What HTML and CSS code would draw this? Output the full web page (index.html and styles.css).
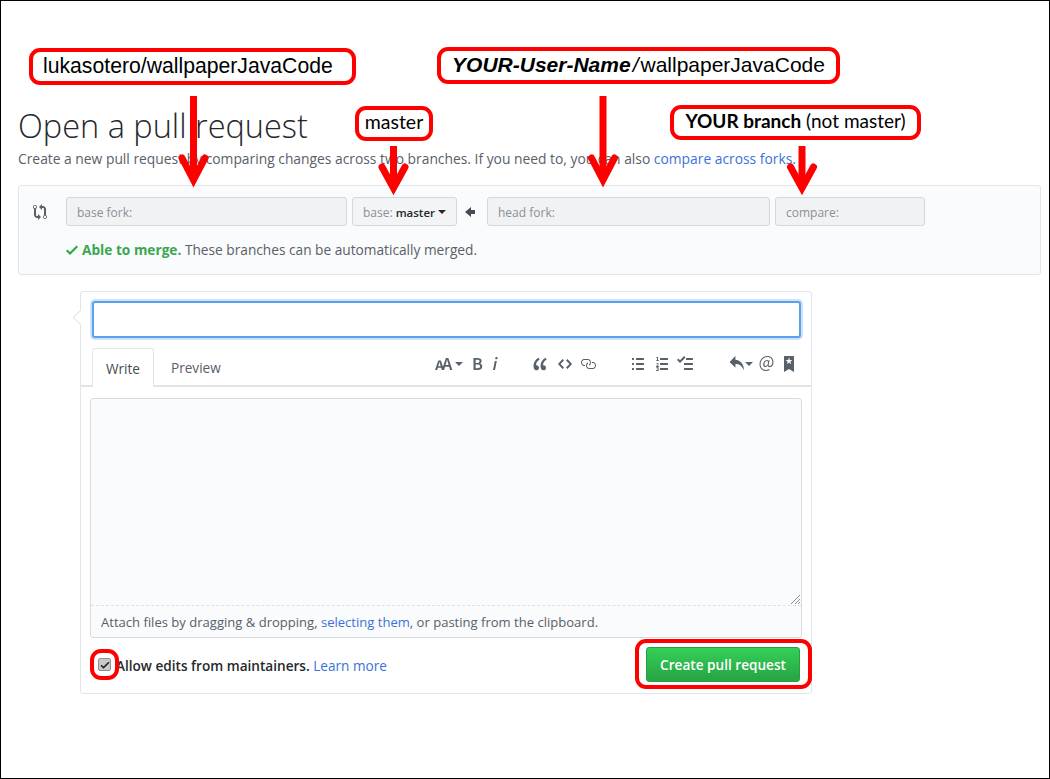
FILE: index.html
```html
<!DOCTYPE html>
<html lang="en">
<head>
    <meta charset="UTF-8" />
    <title>Open a pull request</title>
    <link rel="stylesheet" href="styles.css">
</head>
<body>
<div class="page">
    <h1>Open a pull request</h1>
    <p class="lead">Create a new pull request by comparing changes across two branches. If you need to, you can also <a href="#">compare across forks.</a></p>

    <div class="range">
        <div class="range-row">
            <svg class="ic-compare" viewBox="0 0 14 16" width="14" height="16"><path d="M5 12H4c-.27-.02-.48-.11-.69-.31-.21-.2-.3-.42-.31-.69V4.72A1.993 1.993 0 0 0 2 1a1.993 1.993 0 0 0-1 3.72V11c.03.78.34 1.47.94 2.06.6.59 1.28.91 2.06.94h1v2l3-3-3-3v2zM2 1.8c.66 0 1.2.55 1.2 1.2 0 .65-.55 1.2-1.2 1.2C1.35 4.2.8 3.65.8 3c0-.65.55-1.2 1.2-1.2zm11 9.48V5c-.03-.78-.34-1.47-.94-2.06-.6-.59-1.28-.91-2.06-.94H9V0L6 3l3 3V4h1c.27.02.48.11.69.31.21.2.3.42.31.69v6.28A1.993 1.993 0 0 0 12 15a1.993 1.993 0 0 0 1-3.72zm-1 2.92c-.66 0-1.2-.55-1.2-1.2 0-.65.55-1.2 1.2-1.2.65 0 1.2.55 1.2 1.2 0 .65-.55 1.2-1.2 1.2z"/></svg>
            <div class="pick pick-fork">base fork:</div>
            <div class="pick pick-base">base: <b>master</b><span class="caret"></span></div>
            <svg class="ic-left" viewBox="0 0 10 16" width="10" height="16"><path d="M6 3L0 8l6 5v-3h4V6H6V3z"/></svg>
            <div class="pick pick-head">head fork:</div>
            <div class="pick pick-compare">compare:</div>
        </div>
        <div class="merge">
            <svg class="ic-check" viewBox="0 0 12 16" width="12" height="16"><path d="M12 5l-8 8-4-4 1.5-1.5L4 10l6.5-6.5L12 5z"/></svg>
            <span><b>Able to merge.</b> These branches can be automatically merged.</span>
        </div>
    </div>

    <form class="discussion">
        <div class="title-input"></div>
        <div class="tabbar">
            <div class="tab tab-on">Write</div>
            <div class="tab">Preview</div>
            <div class="toolbar">
                <div class="group group-first">
                    <span class="withcaret"><svg viewBox="0 0 18 16" width="20" height="16"><path d="M13.62 9.08L12.1 3.66h-.06l-1.5 5.42h3.08zM5.7 10.13S4.68 6.52 4.53 6.02h-.08l-1.13 4.11H5.7zM17.31 14h-2.25l-.95-3.25h-4.07L9.09 14H6.84l-.69-2.33H2.87L2.17 14H0l3.3-9.59h2.5l2.17 6.34L10.86 2h2.52l3.94 12h-.01z"/></svg><span class="caret"></span></span>
                    <svg viewBox="0 0 10 16" width="11" height="16"><path d="M1 2h3.83c2.48 0 4.3.75 4.3 2.95 0 1.14-.63 2.23-1.67 2.61v.06c1.33.3 2.3 1.23 2.3 2.86 0 2.39-1.97 3.52-4.61 3.52H1V2zm3.66 4.95c1.67 0 2.38-.66 2.38-1.69 0-1.17-.78-1.61-2.34-1.61H3.13v3.3h1.53zm.27 5.39c1.77 0 2.75-.64 2.75-1.98 0-1.27-.95-1.81-2.75-1.81h-1.8v3.8h1.8v-.01z"/></svg>
                    <svg viewBox="0 0 6 16" width="6" height="16"><path d="M2.81 5h1.98L3 14H1l1.81-9zm.36-2.7c0-.7.58-1.3 1.33-1.3.56 0 1.13.38 1.13 1.03 0 .75-.59 1.3-1.33 1.3-.58 0-1.13-.38-1.13-1.03z"/></svg>
                </div>
                <div class="group">
                    <svg viewBox="0 0 14 16" width="15" height="16"><path d="M6.16 3.5C3.73 5.06 2.55 6.67 2.55 9.36c.16-.05.3-.05.44-.05 1.27 0 2.5.86 2.5 2.41 0 1.61-1.03 2.61-2.5 2.61-1.9 0-2.99-1.52-2.99-4.25 0-3.8 1.75-6.53 5.02-8.42L6.16 3.5zm7 0c-2.43 1.56-3.61 3.17-3.61 5.86.16-.05.3-.05.44-.05 1.27 0 2.5.86 2.5 2.41 0 1.61-1.03 2.61-2.5 2.61-1.89 0-2.98-1.52-2.98-4.25 0-3.8 1.75-6.53 5.02-8.42l1.14 1.84h-.01z"/></svg>
                    <svg viewBox="0 0 14 16" width="14" height="16"><path d="M9.5 3L8 4.5 11.5 8 8 11.5 9.5 13 14 8 9.5 3zm-5 0L0 8l4.5 5L6 11.5 2.5 8 6 4.5 4.5 3z"/></svg>
                    <svg class="ic-link" viewBox="0 0 16 16" width="16" height="16"><path d="M4 9h1v1H4c-1.5 0-3-1.69-3-3.5S2.55 3 4 3h4c1.45 0 3 1.69 3 3.5 0 1.41-.91 2.72-2 3.25V8.59c.58-.45 1-1.27 1-2.09C10 5.22 8.98 4 8 4H4c-.98 0-2 1.22-2 2.5S3 9 4 9zm9-3h-1v1h1c1 0 2 1.22 2 2.5S13.98 12 13 12H9c-.98 0-2-1.22-2-2.5 0-.83.42-1.64 1-2.09V6.25c-1.09.53-2 1.84-2 3.25C6 11.31 7.55 13 9 13h4c1.45 0 3-1.69 3-3.5S14.5 6 13 6z"/></svg>
                </div>
                <div class="group">
                    <svg viewBox="0 0 12 16" width="14" height="16"><path d="M2 13c0 .59 0 1-.59 1H.59C0 14 0 13.59 0 13c0-.59 0-1 .59-1h.81c.59 0 .59.41.59 1H2zm2.59-9h6.81c.59 0 .59-.41.59-1 0-.59 0-1-.59-1H4.59C4 2 4 2.41 4 3c0 .59 0 1 .59 1zM1.41 7H.59C0 7 0 7.41 0 8c0 .59 0 1 .59 1h.81c.59 0 .59-.41.59-1 0-.59 0-1-.59-1h.01zm0-5H.59C0 2 0 2.41 0 3c0 .59 0 1 .59 1h.81c.59 0 .59-.41.59-1 0-.59 0-1-.59-1h.01zm10 5H4.59C4 7 4 7.41 4 8c0 .59 0 1 .59 1h6.81c.59 0 .59-.41.59-1 0-.59 0-1-.59-1h.01zm0 5H4.59C4 12 4 12.41 4 13c0 .59 0 1 .59 1h6.81c.59 0 .59-.41.59-1 0-.59 0-1-.59-1h.01z"/></svg>
                    <svg viewBox="0 0 12 16" width="14" height="16"><path d="M12.01 13c0 .59 0 1-.59 1H4.6c-.59 0-.59-.41-.59-1 0-.59 0-1 .59-1h6.81c.59 0 .59.41.59 1h.01zM4.6 4h6.81C12 4 12 3.59 12 3c0-.59 0-1-.59-1H4.6c-.59 0-.59.41-.59 1 0 .59 0 1 .59 1zm6.81 3H4.6c-.59 0-.59.41-.59 1 0 .59 0 1 .59 1h6.81C12 9 12 8.59 12 8c0-.59 0-1-.59-1zm-9.4-6h-.72c-.3.19-.58.25-1.03.34V2h.75v2.14H.17V5h2.84v-.86h-1V1zm.19 8.75c-.17 0-.42.02-.61.05.48-.5 1.02-1.11 1.02-1.68C2.61 7.42 2.13 7 1.41 7 .86 7 .5 7.19.13 7.59l.5.5c.19-.19.38-.36.64-.36.28 0 .48.16.48.44 0 .48-.67 1.11-1.58 1.95V11h3v-.86h-.97l.01-.39h-.01zm-.08 3.22v-.03c.44-.19.64-.47.64-.86 0-.7-.56-1.11-1.44-1.11-.48 0-.89.19-1.28.52l.55.64c.25-.2.44-.31.69-.31.27 0 .42.13.42.36 0 .27-.2.44-.86.44v.75c.83 0 .98.17.98.47 0 .25-.23.38-.58.38-.28 0-.56-.14-.81-.38l-.48.66c.3.36.77.56 1.41.56.83 0 1.53-.41 1.53-1.16 0-.5-.31-.81-.77-.94v.01z"/></svg>
                    <svg class="ic-tasks" viewBox="0 0 16 16" width="18" height="16"><path d="M15.41 9H7.59C7 9 7 8.59 7 8c0-.59 0-1 .59-1h7.81c.59 0 .59.41.59 1 0 .59 0 1-.59 1h.01zM9.59 4C9 4 9 3.59 9 3c0-.59 0-1 .59-1h5.81c.59 0 .59.41.59 1 0 .59 0 1-.59 1H9.59zM0 3.91l1.41-1.3L3 4.2 7.09 0 8.5 1.41 3 6.91l-3-3zM7.59 12h7.81c.59 0 .59.41.59 1 0 .59 0 1-.59 1H7.59C7 14 7 13.59 7 13c0-.59 0-1 .59-1z"/></svg>
                </div>
                <div class="group">
                    <span class="withcaret ic-reply"><svg viewBox="0 0 14 14" width="15" height="15"><path d="M6 3.5c3.92.44 8 3.125 8 10-2.312-5.062-4.75-6-8-6V11L.5 5.5 6 0v3.5z"/></svg><span class="caret"></span></span>
                    <svg viewBox="0 0 14 16" width="15" height="16"><path d="M6.58 15c1.25 0 2.52-.31 3.56-.94l-.42-.94c-.84.52-1.89.83-3.03.83-3.23 0-5.64-2.08-5.64-5.72 0-4.37 3.23-7.18 6.58-7.18 3.45 0 5.22 2.19 5.22 5.2 0 2.39-1.34 3.86-2.5 3.86-1.05 0-1.36-.73-1.05-2.19l.73-3.75H8.98l-.11.72c-.41-.63-.94-.83-1.56-.83-2.19 0-3.66 2.39-3.66 4.38 0 1.67.94 2.61 2.3 2.61.84 0 1.67-.53 2.3-1.25.11.94.94 1.45 1.98 1.45 1.67 0 3.77-1.67 3.77-5C14 2.61 11.59 0 7.83 0 3.66 0 0 3.33 0 8.33 0 12.71 2.92 15 6.58 15zm-.31-5c-.73 0-1.36-.52-1.36-1.67 0-1.45.94-3.22 2.41-3.22.52 0 .84.2 1.25.83l-.52 3.02c-.63.73-1.25 1.05-1.78 1.05V10z"/></svg>
                    <svg viewBox="0 0 10 16" width="10" height="16"><path d="M9 0H1C.27 0 0 .27 0 1v15l5-3.09L10 16V1c0-.73-.27-1-1-1zm-.78 4.25L6.36 5.61l.72 2.16c.06.22-.02.28-.2.17L5 6.6 3.12 7.94c-.19.11-.25.05-.2-.17l.72-2.16-1.86-1.36c-.17-.16-.14-.23.09-.23l2.3-.03.7-2.16h.25l.7 2.16 2.3.03c.23 0 .27.08.09.23h.01z"/></svg>
                </div>
            </div>
        </div>
        <div class="editor">
            <div class="editor-area">
                <svg class="grip" viewBox="0 0 10 10" width="10" height="10"><path d="M1 10L10 1M5 10L10 5M8 10L10 8"/></svg>
            </div>
            <div class="editor-foot">Attach files by dragging &amp; dropping, <a href="#">selecting them</a>, or pasting from the clipboard.</div>
        </div>
        <div class="actions">
            <label class="allow">
                <span class="fakecheck"><svg viewBox="0 0 12 16" width="10" height="12"><path d="M12 5l-8 8-4-4 1.5-1.5L4 10l6.5-6.5L12 5z"/></svg></span>
                <span class="allow-text"><b>Allow edits from maintainers.</b> <a href="#">Learn more</a></span>
            </label>
            <div class="btn-create">Create pull request</div>
        </div>
    </form>

    <!-- red callouts drawn over the screenshot -->
    <div class="note note-upstream">lukasotero/wallpaperJavaCode</div>
    <div class="note note-user"><b><i>YOUR-User-Name</i></b><i class="slash">/</i>wallpaperJavaCode</div>
    <div class="note note-master">master</div>
    <div class="note note-branch"><b>YOUR branch</b> (not master)</div>
    <div class="ring ring-check"></div>
    <div class="ring ring-create"></div>

    <svg class="arrows" viewBox="0 0 1050 779" width="1050" height="779">
        <path d="M193.5 96V180"/><path class="head" d="M182 158L193.5 180L205 158"/>
        <path d="M393.5 146V188"/><path class="head" d="M382 167L393.5 188L405 167"/>
        <path d="M603 96V180"/><path class="head" d="M591.5 158L603 180L614.5 158"/>
        <path d="M802 146V188"/><path class="head" d="M790.5 167L802 188L813.5 167"/>
    </svg>
</div>
</body>
</html>
```

FILE: styles.css
```css
* {
    box-sizing: border-box;
}
body {
    margin: 0;
    font-family: "Open Sans", sans-serif;
    color: #586069;
}
a {
    color: #3b72d9;
    text-decoration: none;
}
svg {
    fill: #586069;
    display: block;
}
.page {
    position: relative;
    width: 1050px;
    height: 779px;
    padding: 102px 8px 0 17px;
    border: 1px solid #000;
    background: #fff;
    overflow: hidden;
}
h1 {
    margin: 0;
    font-size: 32.5px;
    font-weight: 300;
    line-height: 46px;
    color: #24292e;
}
.lead {
    margin: 1px 0 0;
    font-size: 13.84px;
    line-height: 18px;
}
.range {
    margin-top: 17px;
    height: 90px;
    padding: 11px 0 0 14px;
    background: #fafbfc;
    border: 1px solid #e1e4e8;
    border-radius: 3px;
}
.range-row {
    display: flex;
    align-items: center;
}
.ic-compare {
    margin-right: 19px;
}
.pick {
    height: 29px;
    display: flex;
    align-items: center;
    padding: 1px 0 0 10px;
    font-size: 12px;
    color: #8a9098;
    background: #f0f2f4;
    border: 1px solid #d4d7db;
    border-radius: 3px;
}
.pick b {
    margin-left: 3px;
    font-size: 11.5px;
    font-weight: 600;
    color: #24292e;
}
.pick-fork {
    width: 281px;
}
.pick-base {
    width: 105px;
    margin-left: 5px;
    background: #f2f4f6;
}
.pick-head {
    width: 283px;
}
.pick-compare {
    width: 150px;
    margin-left: 5px;
}
.ic-left {
    margin: 0 12px 0 8px;
    fill: #444d56;
}
.caret {
    margin-left: 3px;
    border: 4px solid transparent;
    border-top-color: #24292e;
    border-bottom: 0;
}
.merge {
    margin: 14px 0 0 33px;
    display: flex;
    align-items: center;
    font-size: 13.7px;
}
.merge b {
    font-weight: 700;
    color: #3da650;
}
.ic-check {
    margin-right: 4px;
    fill: #28a745;
}
.discussion {
    position: relative;
    width: 732px;
    height: 403px;
    margin: 16px 0 0 62px;
    border: 1px solid #e1e4e8;
    border-radius: 3px;
}
.discussion::before {
    content: "";
    position: absolute;
    left: -6px;
    top: 20px;
    width: 10px;
    height: 10px;
    background: #fff;
    border-left: 1px solid #e1e4e8;
    border-bottom: 1px solid #e1e4e8;
    transform: rotate(45deg);
}
.title-input {
    position: relative;
    height: 37px;
    margin: 9px 10px 0 11px;
    background: #fff;
    border: 2px solid #5b9ff0;
    border-radius: 3px;
    box-shadow: 0 0 0 2px #cfe2f8;
}
.tabbar {
    display: flex;
    height: 39px;
    margin-top: 10px;
    padding-left: 11px;
    border-bottom: 2px solid #e1e4e8;
}
.tab {
    height: 39px;
    padding: 10px 17px 0;
    font-size: 13.6px;
    line-height: 20px;
}
.tab-on {
    width: 62px;
    padding: 10px 0 0;
    text-align: center;
    color: #444d56;
    background: #fff;
    border: 1px solid #e1e4e8;
    border-bottom: 0;
    border-radius: 3px 3px 0 0;
}
.toolbar {
    display: flex;
    margin-left: auto;
    padding: 8px 17px 0 0;
    gap: 35px;
}
.group {
    display: flex;
    gap: 10px;
    align-items: flex-start;
}
.group-first {
    gap: 9px;
}
.ic-link {
    margin-left: -2px;
}
.ic-tasks {
    margin-left: -3px;
}
.ic-reply {
    margin-right: -4px;
}
.withcaret {
    display: flex;
    align-items: center;
}
.withcaret .caret {
    margin-left: 1px;
    border-top-color: #586069;
}
.editor {
    margin: 11px 9px 0 9px;
    height: 240px;
    background: #fafbfc;
    border: 1px solid #d8dbdf;
    border-radius: 3px;
}
.editor-area {
    position: relative;
    height: 207px;
    border-bottom: 1px dashed #dfe2e5;
}
.grip {
    position: absolute;
    right: 1px;
    bottom: 1px;
}
.grip path {
    fill: none;
    stroke: #8a8f94;
    stroke-width: 1;
}
.editor-foot {
    padding: 6px 10px 0;
    font-size: 13.05px;
    line-height: 20px;
}
.actions {
    display: flex;
    justify-content: space-between;
    align-items: center;
    margin: 9px 11px 0 10px;
}
.allow {
    display: flex;
    align-items: center;
    font-size: 13.6px;
}
.allow-text {
    padding-top: 2px;
}
.allow b {
    font-weight: 600;
    color: #24292e;
}
.fakecheck {
    display: flex;
    align-items: center;
    justify-content: center;
    width: 13px;
    height: 13px;
    margin: 0 5px 0 7px;
    background: #c9c9c9;
    border: 1px solid #8e8e8e;
    border-radius: 2px;
}
.fakecheck svg {
    flex: none;
    fill: #222;
}
.btn-create {
    width: 154px;
    height: 35px;
    font-size: 13.6px;
    font-weight: 600;
    line-height: 33px;
    text-align: center;
    color: #fff;
    background: linear-gradient(#34d058, #28a745 90%);
    border: 1px solid #2a9c46;
    border-radius: 3px;
}
.note {
    position: absolute;
    display: flex;
    align-items: center;
    justify-content: center;
    background: #fff;
    color: #000;
    border: 4px solid #f00;
    border-radius: 11px;
    white-space: pre;
}
.note-upstream {
    left: 28px;
    top: 47px;
    width: 327px;
    height: 37px;
    padding: 0 0 2px 10px;
    justify-content: flex-start;
    font: 21.2px "Liberation Sans", sans-serif;
}
.note-user {
    left: 436px;
    top: 46px;
    width: 403px;
    height: 37px;
    padding-bottom: 2px;
    font: 21px "Liberation Sans", sans-serif;
}
.slash {
    margin: 0 2px;
}
.note-master {
    left: 354px;
    top: 105px;
    width: 78px;
    height: 35px;
    padding-bottom: 5px;
    font: 19.5px Lato, sans-serif;
}
.note-branch {
    left: 669px;
    top: 104px;
    width: 251px;
    height: 35px;
    padding-bottom: 5px;
    font: 19px Lato, sans-serif;
}
.ring {
    position: absolute;
    border: 4px solid #f00;
    border-radius: 11px;
}
.ring-check {
    left: 89px;
    top: 648px;
    width: 29px;
    height: 31px;
}
.ring-create {
    left: 634px;
    top: 638px;
    width: 177px;
    height: 50px;
}
.arrows {
    position: absolute;
    left: -1px;
    top: -1px;
    pointer-events: none;
}
.arrows path {
    fill: none;
    stroke: #f00;
    stroke-width: 7;
}
.arrows .head {
    stroke-linecap: round;
    stroke-linejoin: miter;
}
```
